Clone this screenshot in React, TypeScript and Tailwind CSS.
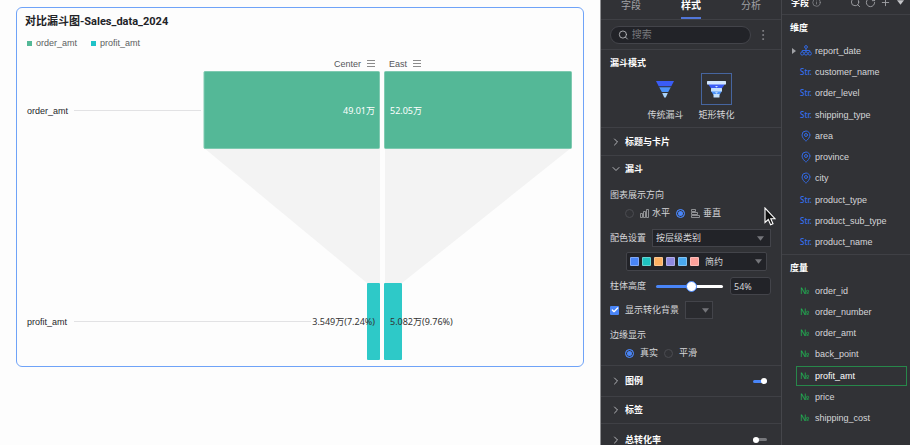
import { useState } from "react";
import type { ReactNode } from "react";
import { Check, ChevronDown, ChevronRight, EllipsisVertical, Info, MapPin, Plus, RotateCw, Search } from "lucide-react";
import clsx from "clsx";

type FieldKind = "date" | "str" | "geo" | "num";

interface Field {
  name: string;
  kind: FieldKind;
}

const dimensions: Field[] = [
  { name: "report_date", kind: "date" },
  { name: "customer_name", kind: "str" },
  { name: "order_level", kind: "str" },
  { name: "shipping_type", kind: "str" },
  { name: "area", kind: "geo" },
  { name: "province", kind: "geo" },
  { name: "city", kind: "geo" },
  { name: "product_type", kind: "str" },
  { name: "product_sub_type", kind: "str" },
  { name: "product_name", kind: "str" },
];

const measures: Field[] = [
  { name: "order_id", kind: "num" },
  { name: "order_number", kind: "num" },
  { name: "order_amt", kind: "num" },
  { name: "back_point", kind: "num" },
  { name: "profit_amt", kind: "num" },
  { name: "price", kind: "num" },
  { name: "shipping_cost", kind: "num" },
];

const swatches = ["bg-[#4985f7]", "bg-[#1fc3c1]", "bg-[#fdb062]", "bg-[#8f8ae0]", "bg-[#4aa9f0]", "bg-[#fca19b]"];

function MenuLines({ x, y }: { x: number; y: number }) {
  return <path d={`M${x} ${y + 0.5}h8M${x} ${y + 3.5}h8M${x} ${y + 6.5}h8`} stroke="#8b8b8b" strokeWidth="1" />;
}

function FunnelChart() {
  return (
    <svg viewBox="0 0 566 312" className="block h-auto w-full text-[9px]" role="img" aria-label="对比漏斗图">
      <g fill="#f3f3f3">
        <path d="M187 94H363V229H350Z" />
        <path d="M368 94H554L385 229H368Z" />
      </g>
      <path d="M57 56.5H184M57 267.5H294" stroke="#e2e2e4" />
      <g fill="#54b897" stroke="#7fcab1" strokeWidth="1">
        <rect x="187" y="17.500" width="175.500" height="77" rx="1" />
        <rect x="367.500" y="17.500" width="187" height="77" rx="1" />
      </g>
      <g fill="#2ec9c8">
        <rect x="350" y="229" width="13" height="77" rx="1" />
        <rect x="367" y="229" width="18" height="77" rx="1" />
      </g>
      <g fill="#55565a">
        <text x="344" y="13" textAnchor="end">Center</text>
        <text x="372" y="13">East</text>
      </g>
      <MenuLines x={350} y={6} />
      <MenuLines x={396} y={6} />
      <g fill="#26272b">
        <text x="10" y="60">order_amt</text>
        <text x="10" y="271">profit_amt</text>
      </g>
      <g className="font-['Noto_Sans','Noto_Sans_CJK_SC',sans-serif]">
        <text x="358" y="60" textAnchor="end" fill="#fff">49.01万</text>
        <text x="373" y="60" fill="#fff">52.05万</text>
        <text x="358" y="271" textAnchor="end" fill="#333">3.549万(7.24%)</text>
        <text x="373" y="271" fill="#333">5.082万(9.76%)</text>
      </g>
    </svg>
  );
}

function Caret({ className }: { className?: string }) {
  return (
    <svg viewBox="0 0 8 5" className={clsx("pointer-events-none h-[5px] w-[7px] fill-[#74757a]", className)} aria-hidden="true">
      <path d="M0 0H8L4 5Z" />
    </svg>
  );
}

function ClassicFunnelIcon() {
  return (
    <svg viewBox="0 0 18 17" className="h-[17px] w-[18px]" aria-hidden="true">
      <path d="M0 0H18L15.300 5.200H2.700Z" fill="#3a5cf5" />
      <path d="M3.200 6.200H14.800L12.200 11H5.800Z" fill="#4c93fa" />
      <path d="M6.200 12H11.800L9.800 16.500H8.200Z" fill="#a9d3fb" />
    </svg>
  );
}

function RectFunnelIcon() {
  return (
    <svg viewBox="0 0 19 17" className="h-[17px] w-[19px]" aria-hidden="true">
      <path d="M1 3H18L14.500 8H4.500Z" fill="#3a5cf5" />
      <path d="M4 10H15L12.500 14H6.500Z" fill="#4c93fa" />
      <rect width="19" height="3.500" rx=".5" fill="#d3e7fd" />
      <rect x="4" y="7" width="11" height="3.500" rx=".5" fill="#c4e0fc" />
      <rect x="6.500" y="13" width="6" height="3.500" rx=".5" fill="#c4e0fc" />
      <path d="M8 5h3L9.500 6.600ZM8 11.300h3L9.500 12.800Z" fill="#cfe5fd" />
    </svg>
  );
}

function Radio({ name, label, defaultChecked, icon }: { name: string; label: string; defaultChecked?: boolean; icon?: ReactNode }) {
  return (
    <label className="flex items-center gap-1.5">
      <input
        type="radio"
        name={name}
        defaultChecked={defaultChecked}
        className="h-[9px] w-[9px] appearance-none rounded-full border border-[#4b4c51] checked:border-[#4985f7] checked:bg-[#4985f7] checked:shadow-[inset_0_0_0_1px_#313236]"
      />
      <span className="flex items-center gap-[3px]">
        {icon}
        {label}
      </span>
    </label>
  );
}

function Switch({ label, defaultChecked }: { label: string; defaultChecked?: boolean }) {
  return (
    <input
      type="checkbox"
      role="switch"
      aria-label={label}
      defaultChecked={defaultChecked}
      className="mr-3.5 flex h-[3px] w-3.5 appearance-none items-center rounded-full bg-[#77787c] before:h-1.5 before:w-1.5 before:shrink-0 before:rounded-full before:bg-white checked:justify-end checked:bg-[#4985f7]"
    />
  );
}

function Section({ title, open, className, children }: { title: string; open?: boolean; className: string; children?: ReactNode }) {
  const Icon = open ? ChevronDown : ChevronRight;
  return (
    <div className={clsx("flex items-center justify-between", className)}>
      <button type="button" aria-expanded={!!open} className="flex items-center gap-[3px] pl-[9px] font-bold text-white">
        <Icon className="h-3 w-3 text-[#b5b6ba]" strokeWidth={2} />
        {title}
      </button>
      {children}
    </div>
  );
}

function StylePanel() {
  const [height, setHeight] = useState(54);

  return (
    <aside className="w-[181px] shrink-0 overflow-hidden border-l border-[#8f9093] bg-[#313236] text-[9px] leading-3 text-[#d5d6d9]">
      <nav className="flex h-5 justify-around border-b border-[#3f4045] text-[10px] text-[#a0a1a5]">
        <button type="button" className="pb-[9px]">字段</button>
        <button type="button" aria-current="page" className="border-b-2 border-[#5176d8] pb-[7px] font-bold text-white">
          样式
        </button>
        <button type="button" className="pb-[9px]">分析</button>
      </nav>

      <div className="flex h-[30px] items-center border-b border-[#3f4045] pl-[9px]">
        <label className="flex h-[18px] w-[141px] items-center gap-[3px] rounded-full border border-[#43444a] bg-[#222328] pl-[7px]">
          <Search className="h-3 w-3 text-[#b5b6ba]" strokeWidth={2} />
          <input aria-label="搜索" placeholder="搜索" className="w-full bg-transparent text-[10px] outline-none placeholder:text-[#77787c]" />
        </label>
        <button type="button" aria-label="更多" className="ml-[5px] text-[#a0a1a5]">
          <EllipsisVertical className="h-3.5 w-3.5" strokeWidth={1} />
        </button>
      </div>

      <section className="border-b border-[#3f4045] pb-1.5 pt-[7px]">
        <h2 className="pl-[9px] font-bold text-white">漏斗模式</h2>
        <div className="mt-1 flex justify-center gap-[15px]">
          <button type="button" className="flex flex-col items-center gap-1">
            <span className="grid h-8 w-[31px] place-items-center">
              <ClassicFunnelIcon />
            </span>
            传统漏斗
          </button>
          <button type="button" aria-pressed="true" className="flex flex-col items-center gap-1">
            <span className="grid h-8 w-[31px] place-items-center border border-[#46659f]">
              <RectFunnelIcon />
            </span>
            矩形转化
          </button>
        </div>
      </section>

      <Section title="标题与卡片" className="h-7 border-b border-[#3f4045]" />
      <Section title="漏斗" open className="h-[26px]" />

      <div className="border-b border-[#3f4045] pb-1.5 pl-[9px] pr-2.5 pt-[7px]">
        <p>图表展示方向</p>
        <div className="mt-1.5 flex gap-1.5 pl-[15px]">
          <Radio
            name="direction"
            label="水平"
            icon={
              <svg viewBox="0 0 9 9" className="h-[9px] w-[9px] fill-none stroke-[#a5a6aa]" strokeWidth=".8" aria-hidden="true">
                <path d="M.5 4.500h2v4h-2zM3.500 2.500h2v6h-2zM6.500.5h2v8h-2z" />
              </svg>
            }
          />
          <Radio
            name="direction"
            label="垂直"
            defaultChecked
            icon={
              <svg viewBox="0 0 9 9" className="h-[9px] w-[9px] fill-none stroke-[#a5a6aa]" strokeWidth=".8" aria-hidden="true">
                <path d="M.5.5h4v2h-4zM.5 3.500h6v2h-6zM.5 6.500h8v2h-8z" />
              </svg>
            }
          />
        </div>

        <div className="mt-[10px] flex items-center gap-1.5">
          <label htmlFor="color-mode" className="shrink-0">配色设置</label>
          <span className="relative flex flex-1 items-center">
            <select id="color-mode" className="h-[18px] w-full appearance-none border border-[#43444a] bg-[#222328] pl-[3px]">
              <option>按层级类别</option>
            </select>
            <Caret className="absolute right-[7px]" />
          </span>
        </div>

        <div className="relative ml-4 mr-1 mt-[5px] flex items-center">
          <select aria-label="配色方案" className="h-[19px] w-full appearance-none rounded-xs border border-[#43444a] bg-[#222328] pl-[78px]">
            <option>简约</option>
          </select>
          <span className="pointer-events-none absolute left-1 flex gap-[3px]">
            {swatches.map((color) => (
              <span key={color} className={clsx("h-[9px] w-[9px] rounded-[1px] border border-white/30", color)} />
            ))}
          </span>
          <Caret className="absolute right-[5px]" />
        </div>

        <div className="mt-1.5 flex items-center">
          <label htmlFor="bar-height" className="shrink-0">柱体高度</label>
          <input
            id="bar-height"
            type="range"
            value={height}
            onChange={(e) => setHeight(Number(e.target.value))}
            style={{ backgroundImage: `linear-gradient(to right, #4985f7 ${height}%, #fff ${height}%)` }}
            className="ml-2.5 mr-[7px] h-[3px] w-[67px] appearance-none rounded-full [&::-webkit-slider-thumb]:h-[11px] [&::-webkit-slider-thumb]:w-[11px] [&::-webkit-slider-thumb]:appearance-none [&::-webkit-slider-thumb]:rounded-full [&::-webkit-slider-thumb]:border [&::-webkit-slider-thumb]:border-[#4985f7] [&::-webkit-slider-thumb]:bg-white"
          />
          <input
            aria-label="柱体高度百分比"
            value={`${height}%`}
            readOnly
            className="h-[18px] min-w-0 flex-1 rounded-[3px] border border-[#43444a] bg-[#222328] pl-[3px] font-['Noto_Sans',sans-serif]"
          />
        </div>

        <div className="mt-1.5 flex items-center gap-1.5">
          <label className="flex items-center gap-1.5">
            <span className="relative grid place-items-center">
              <input type="checkbox" defaultChecked className="h-[9px] w-[9px] appearance-none rounded-[1px] bg-[#4985f7]" />
              <Check className="pointer-events-none absolute h-2 w-2 text-white" strokeWidth={4} />
            </span>
            显示转化背景
          </label>
          <span className="relative flex items-center">
            <select aria-label="背景颜色" className="h-[18px] w-7 appearance-none border border-[#43444a] bg-[#2a2b2f]" />
            <Caret className="absolute right-1" />
          </span>
        </div>

        <p className="mt-[10px]">边缘显示</p>
        <div className="mt-1.5 flex gap-1.5 pl-[15px]">
          <Radio name="edge" label="真实" defaultChecked />
          <Radio name="edge" label="平滑" />
        </div>
      </div>

      <Section title="图例" className="h-[31px] border-b border-[#3f4045]">
        <Switch label="图例" defaultChecked />
      </Section>
      <Section title="标签" className="h-[27px] border-b border-[#3f4045]" />
      <Section title="总转化率" className="h-[31px]">
        <Switch label="总转化率" />
      </Section>
    </aside>
  );
}

function FieldIcon({ kind }: { kind: FieldKind }) {
  if (kind === "date") {
    return (
      <svg viewBox="0 0 12 11" className="h-[11px] w-3 fill-none stroke-[#3268e0]" aria-hidden="true">
        <circle cx="6" cy="2" r="1.400" />
        <circle cx="2.200" cy="8.500" r="1.600" />
        <circle cx="6" cy="8.500" r="1.600" />
        <circle cx="9.800" cy="8.500" r="1.600" />
        <path d="M6 3.500V7M2.200 7V5.500H9.800V7" />
      </svg>
    );
  }
  if (kind === "geo") {
    return <MapPin className="h-3 w-3 text-[#3268e0]" strokeWidth={2} />;
  }
  return (
    <span className={clsx("font-['Noto_Sans',sans-serif]", kind === "str" ? "text-[8px] font-medium text-[#3470ee]" : "text-[#1fb055]")}>
      {kind === "str" ? "Str." : "№"}
    </span>
  );
}

function FieldRow({ field, selected }: { field: Field; selected?: boolean }) {
  return (
    <li className="flex items-center">
      <button
        type="button"
        className={clsx(
          "mr-[3px] flex h-5 flex-1 items-center border",
          selected ? "border-[#27874a] text-white" : "border-transparent",
        )}
      >
        <span className="flex w-[18px] shrink-0 pl-[3px]">
          <FieldIcon kind={field.kind} />
        </span>
        {field.name}
      </button>
    </li>
  );
}

function FieldPanel() {
  return (
    <aside className="w-[129px] shrink-0 overflow-hidden border-l border-[#45464b] bg-[#313236] text-[9px] leading-3 text-[#d5d6d9]">
      <header className="flex h-[15px] items-start border-b border-[#3f4045] pl-[9px] pr-1.5">
        <h2 className="-mt-[3px] font-bold text-white">字段</h2>
        <Info className="-mt-0.5 ml-[3px] h-[9px] w-[9px] text-[#8b8c90]" />
        <div className="-mt-[3px] ml-auto flex items-center gap-1 text-[#a0a1a5]">
          <button type="button" aria-label="搜索字段"><Search className="h-[11px] w-[11px]" /></button>
          <button type="button" aria-label="刷新"><RotateCw className="h-[11px] w-[11px]" /></button>
          <button type="button" aria-label="新增"><Plus className="h-[11px] w-[11px]" /></button>
          <button type="button" aria-label="更多操作" className="pl-0.5"><Caret className="fill-[#c5c6c9]" /></button>
        </div>
      </header>

      <section className="border-b border-[#3f4045] pb-px pt-[7px]">
        <h3 className="pl-2 font-bold text-white">维度</h3>
        <div className="mt-1.5 flex">
          <svg viewBox="0 0 4 6" className="ml-2.5 mt-2 h-1.5 w-1 fill-[#a0a1a5]" aria-hidden="true">
            <path d="M0 0L4 3L0 6Z" />
          </svg>
          <ul className="grid h-[213px] flex-1 auto-rows-fr">
            {dimensions.map((field) => (
              <FieldRow key={field.name} field={field} />
            ))}
          </ul>
        </div>
      </section>

      <section className="pt-[7px]">
        <h3 className="pl-2 font-bold text-white">度量</h3>
        <ul className="ml-3.5 mt-1.5 grid h-[149px] auto-rows-fr">
          {measures.map((field) => (
            <FieldRow key={field.name} field={field} selected={field.name === "profit_amt"} />
          ))}
        </ul>
      </section>
    </aside>
  );
}

export default function App() {
  return (
    <div className="relative flex h-screen overflow-hidden bg-[#fdfdfd] font-['Liberation_Sans','Noto_Sans_CJK_SC',sans-serif]">
      <main className="min-w-0 flex-1 px-4 pt-[7px]">
        <article className="rounded-md border border-[#6fa3f8]">
          <h1 className="pl-2 pt-1.5 font-['Roboto','Noto_Sans_CJK_SC',sans-serif] text-[11px] font-bold leading-4 text-[#222327]">
            对比漏斗图-Sales_data_2024
          </h1>
          <ul className="flex gap-3.5 pb-[5px] pl-2.5 pt-[7px] text-[9px] leading-3 text-[#5c5d61]">
            <li className="flex items-center gap-1">
              <span className="h-[5px] w-[5px] bg-[#54b897]" />
              order_amt
            </li>
            <li className="flex items-center gap-1">
              <span className="h-[5px] w-[5px] bg-[#1fc3c8]" />
              profit_amt
            </li>
          </ul>
          <FunnelChart />
        </article>
      </main>
      <StylePanel />
      <FieldPanel />
      <svg viewBox="0 0 12 19" className="pointer-events-none absolute left-[764px] top-[207px] h-[19px] w-3" aria-hidden="true">
        <path d="M1 1V15.500L4.300 12.500L6.600 17.800L9 16.800L6.800 11.700H11Z" fill="#111" stroke="#fff" strokeWidth="1.100" />
      </svg>
    </div>
  );
}
